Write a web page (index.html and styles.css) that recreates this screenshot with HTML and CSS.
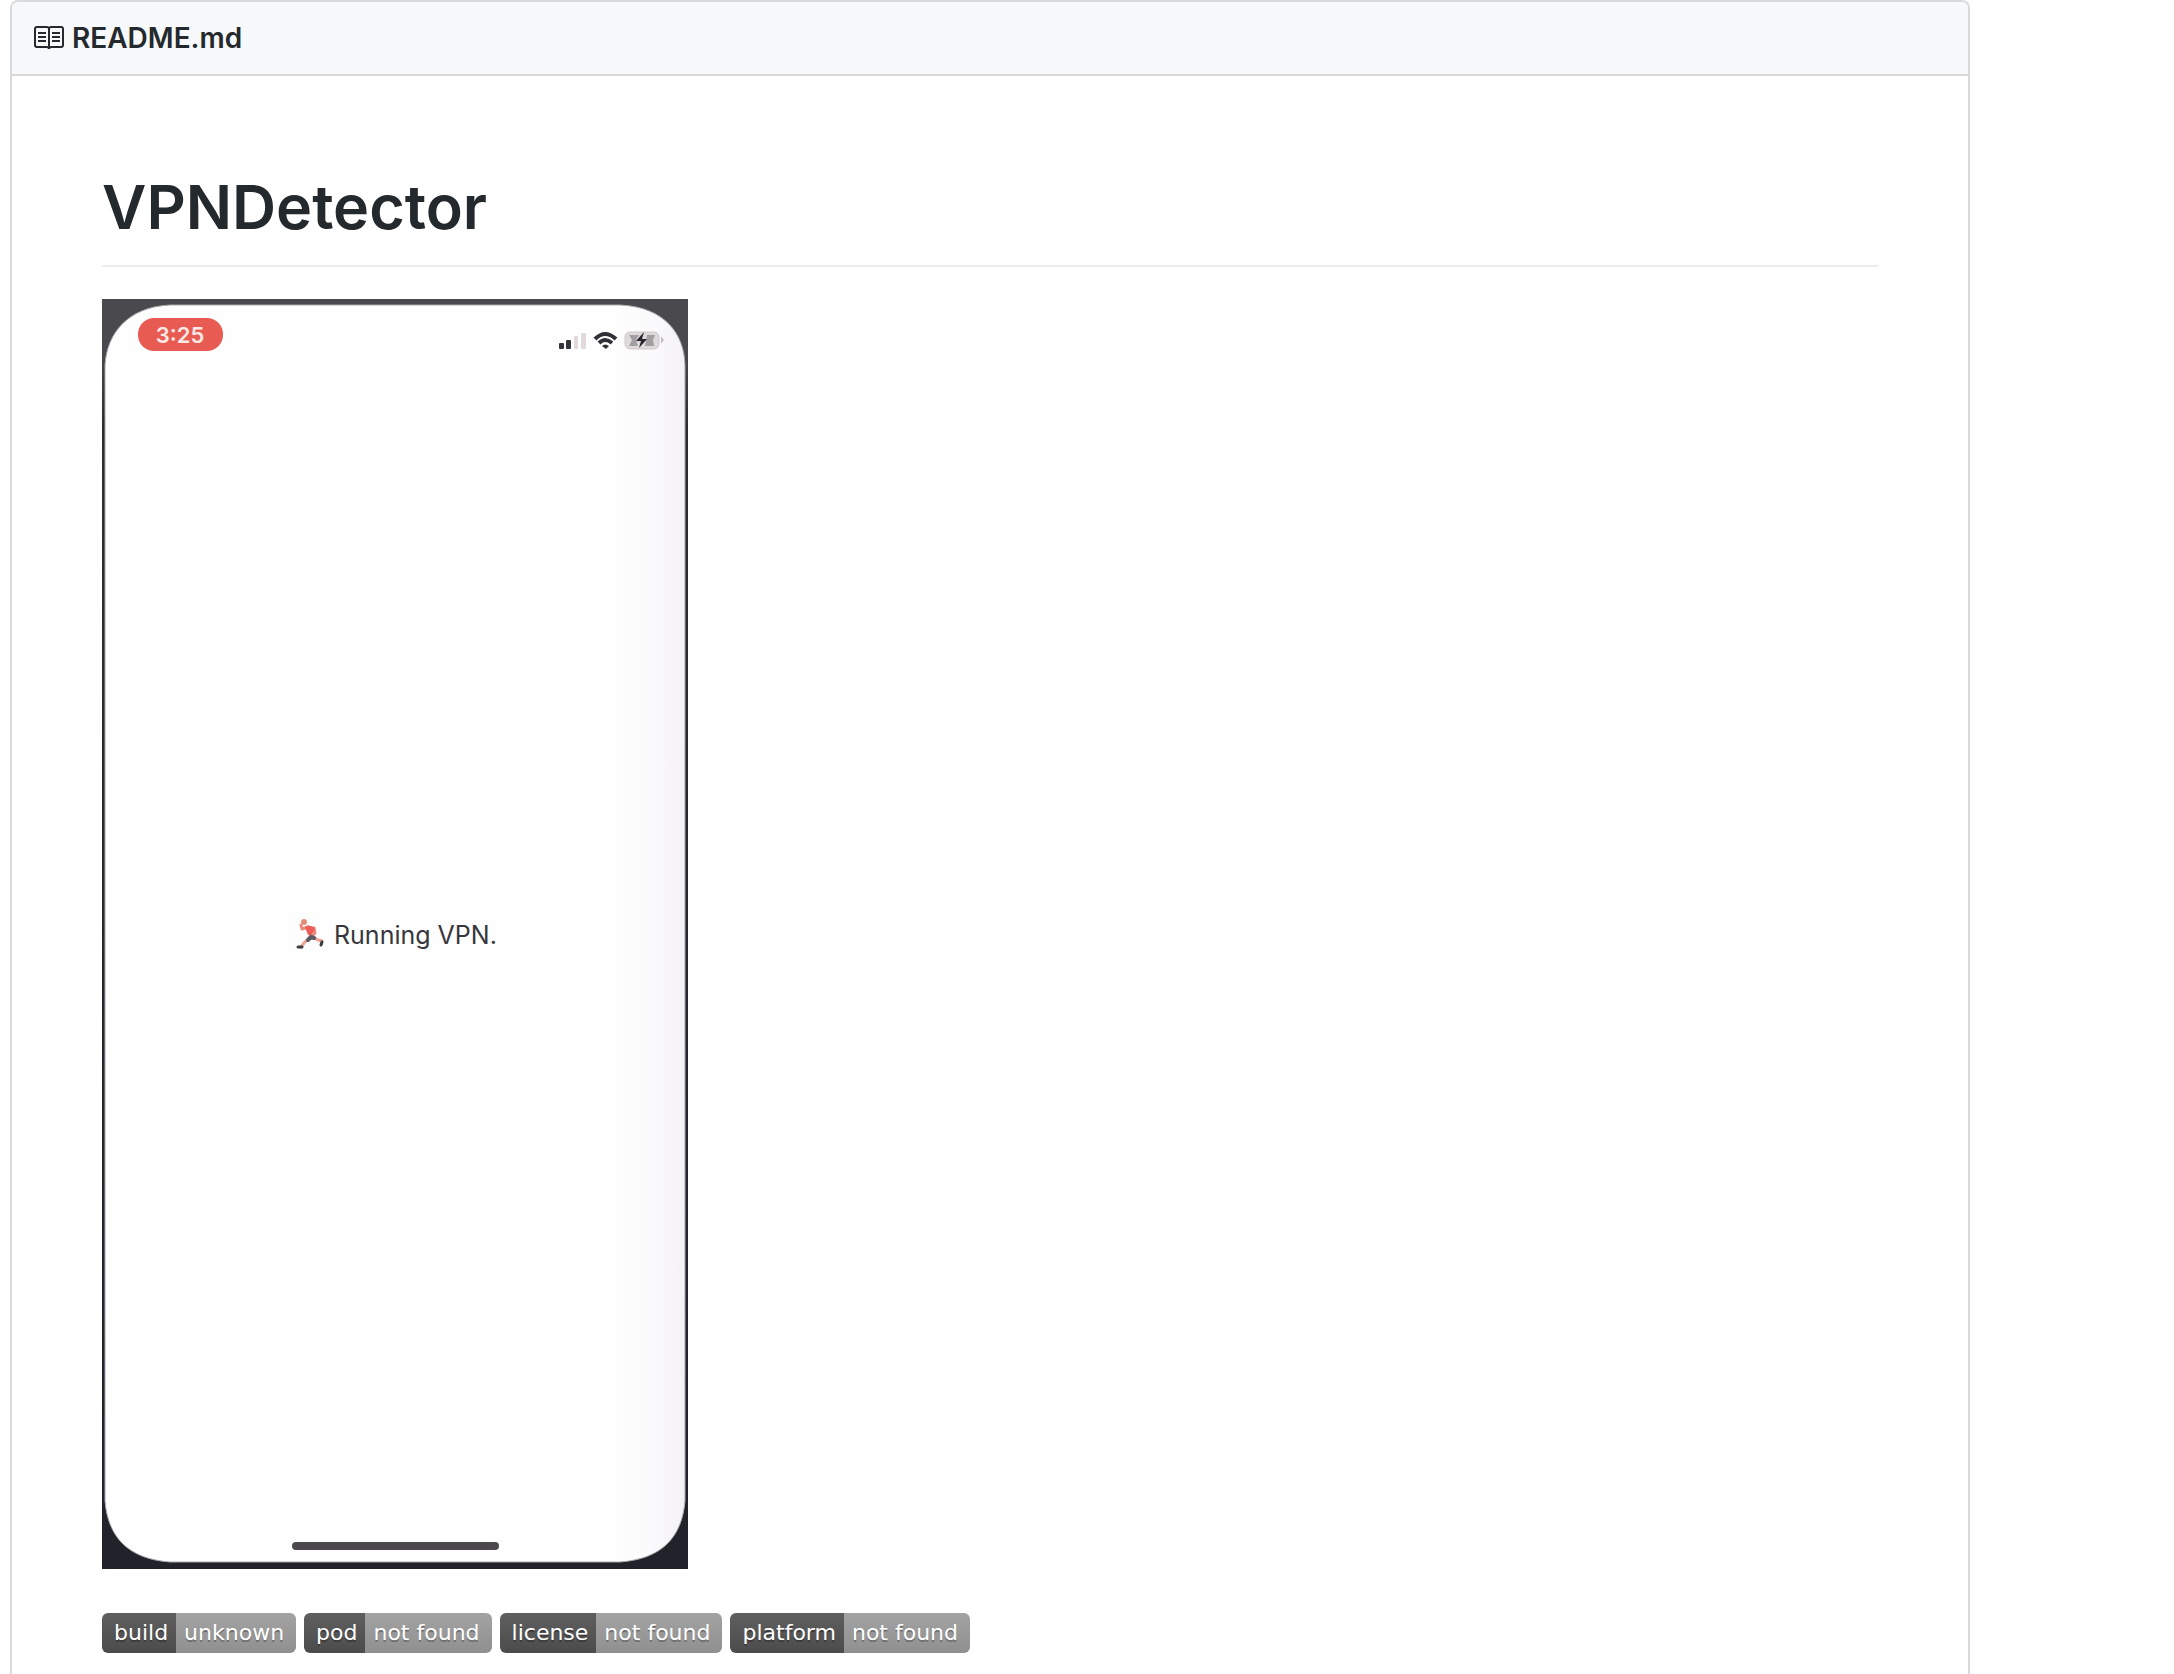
FILE: index.html
```html
<!DOCTYPE html>
<html lang="en">
<head>
<meta charset="utf-8">
<title>README.md</title>
<link rel="stylesheet" href="styles.css">
</head>
<body>
<main class="readme">
  <header class="readme-header">
    <svg class="book-icon" viewBox="0 0 30 24" aria-hidden="true">
      <path d="M1 3q0-2 2-2h9.500q2.500 0 2.500 1.500Q15 1 17.500 1H27q2 0 2 2v16q0 2-2 2h-9.500Q15 21 15 23q0-2-2.500-2H3q-2 0-2-2zM15 2v20" fill="none" stroke="#24292e" stroke-width="2"/>
      <path d="M4 7h8M4 11h8M4 15h8M18 7h8M18 11h8M18 15h8" stroke="#24292e" stroke-width="2"/>
    </svg>
    <h2 class="file-name">README.md</h2>
  </header>
  <article class="readme-body">
    <h1 class="title">VPNDetector</h1>
    <svg class="demo" viewBox="0 0 586 1270" role="img" aria-label="Phone running VPNDetector">
      <defs>
        <linearGradient id="frame" x1="0" y1="0" x2="0" y2="1">
          <stop offset="0" stop-color="#4a494e"/>
          <stop offset="0.04" stop-color="#4a494e"/>
          <stop offset="0.1" stop-color="#2c2c33"/>
          <stop offset="1" stop-color="#22222a"/>
        </linearGradient>
        <linearGradient id="shade" x1="0" y1="0" x2="1" y2="0">
          <stop offset="0" stop-color="#fefefe"/>
          <stop offset="0.88" stop-color="#fefefe"/>
          <stop offset="0.94" stop-color="#fbfafc"/>
          <stop offset="1" stop-color="#f4f2f6"/>
        </linearGradient>
      </defs>
      <rect width="586" height="1270" fill="url(#frame)"/>
      <path d="M68 6H518C562 8 582 34 583 66V1202C580 1238 560 1260 518 1263H68C26 1260 6 1238 3 1202V66C5 34 26 8 68 6z" fill="url(#shade)" stroke="#a9a8ac" stroke-width="1"/>
      <rect x="36" y="19" width="85" height="33" rx="16" fill="#e85b52"/>
      <text class="clock" x="78" y="44">3:25</text>
      <g class="signal">
        <rect x="457" y="44" width="5" height="6" rx="1" fill="#34343a"/>
        <rect x="464" y="41" width="5" height="9" rx="1" fill="#34343a"/>
        <rect x="472" y="37" width="4" height="13" rx="1" fill="#e2d9dc"/>
        <rect x="479" y="34" width="5" height="16" rx="1" fill="#e2d9dc"/>
      </g>
      <g fill="none" stroke="#303036" stroke-width="4">
        <path d="M493 40Q503 30 514 40"/>
        <path d="M497 44Q503 38 510 44"/>
      </g>
      <path d="M500 47q3-3 7 0l-3 3z" fill="#303036"/>
      <rect x="523" y="33" width="34" height="17" rx="5" fill="#dedadc" stroke="#d0c8cb"/>
      <path d="M559 37l3 4-3 4z" fill="#c5c1c4"/>
      <path d="M527 36h10l-3 5 2 6h-9l3-6zM545 36h8l-2 5 1 6h-9z" fill="#a19fa2"/>
      <path d="M542 33l-8 9h5l-2 7 8-9h-5z" fill="#25252b"/>
      <g class="runner" fill="none" stroke-linecap="round" stroke-linejoin="round">
        <path d="M208 638l-6 6-3 4M211 638l5 3 4 1" stroke="#e9a08c" stroke-width="3"/>
        <path d="M206 628l-6 2-1-4M212 629l1 5-3 3" stroke="#e9897b" stroke-width="3"/>
        <circle cx="202" cy="623" r="3" fill="#e58c78"/>
        <path d="M206 629l4 1-2 4z" fill="#ee5d55" stroke="#ee5d55" stroke-width="5"/>
        <path d="M209 638l-3 3M209 638l3 1" stroke="#5c5b63" stroke-width="4"/>
        <path d="M196 648h4M220 643l-1 3" stroke="#3c3c43" stroke-width="3"/>
      </g>
      <text class="status" x="232" y="645">Running VPN.</text>
      <rect x="190" y="1243" width="207" height="8" rx="4" fill="#4b494e"/>
    </svg>
    <p class="badges">
      <span class="badge"><span class="badge-label">build</span><span class="badge-value">unknown</span></span>
      <span class="badge"><span class="badge-label">pod</span><span class="badge-value">not found</span></span>
      <span class="badge"><span class="badge-label">license</span><span class="badge-value">not found</span></span>
      <span class="badge"><span class="badge-label">platform</span><span class="badge-value">not found</span></span>
    </p>
  </article>
</main>
</body>
</html>
```
FILE: styles.css
```css
* { box-sizing: border-box; }

body {
  margin: 0;
  background: #fff;
  color: #24292e;
  font-family: Inter, "Liberation Sans", sans-serif;
}

.readme {
  min-height: 100vh;
  margin: 0 204px 0 10px;
  border: 2px solid #d9dadc;
  border-bottom: 0;
  border-radius: 8px 8px 0 0;
}

.readme-header {
  display: flex;
  align-items: center;
  gap: 8px;
  padding: 16px 22px;
  border-bottom: 2px solid #d9dadc;
  border-radius: 6px 6px 0 0;
  background: #f6f8fa;
}

.book-icon { width: 30px; height: 24px; }

.file-name {
  margin: 0;
  font-size: 28px;
  font-weight: 600;
  line-height: 40px;
}

.readme-body { padding: 91px 90px 20px; }

.title {
  margin: 0 0 32px;
  padding-bottom: 18px;
  border-bottom: 2px solid #eaecef;
  font-size: 61px;
  font-weight: 600;
  line-height: 80px;
}

.demo {
  display: block;
  width: 586px;
  max-width: 100%;
  height: auto;
}

.clock {
  fill: #fbe9e6;
  font-size: 22px;
  font-weight: 600;
  text-anchor: middle;
}

.status {
  fill: #37373c;
  font-size: 25px;
}

.badges {
  display: flex;
  flex-wrap: wrap;
  gap: 8px;
  margin: 44px 0 0;
}

.badge {
  display: flex;
  overflow: hidden;
  border-radius: 6px;
  color: #fff;
  font-family: "DejaVu Sans", sans-serif;
  font-size: 22px;
  line-height: 40px;
}

.badge-label {
  padding: 0 8px 0 12px;
  background: linear-gradient(#5f5f5f, #4b4b4b);
  text-shadow: 0 2px #3b3b3b;
}

.badge-value {
  padding: 0 12px 0 8px;
  background: linear-gradient(#a3a3a3, #8f8f8f);
  text-shadow: 0 2px #707070;
}
```
